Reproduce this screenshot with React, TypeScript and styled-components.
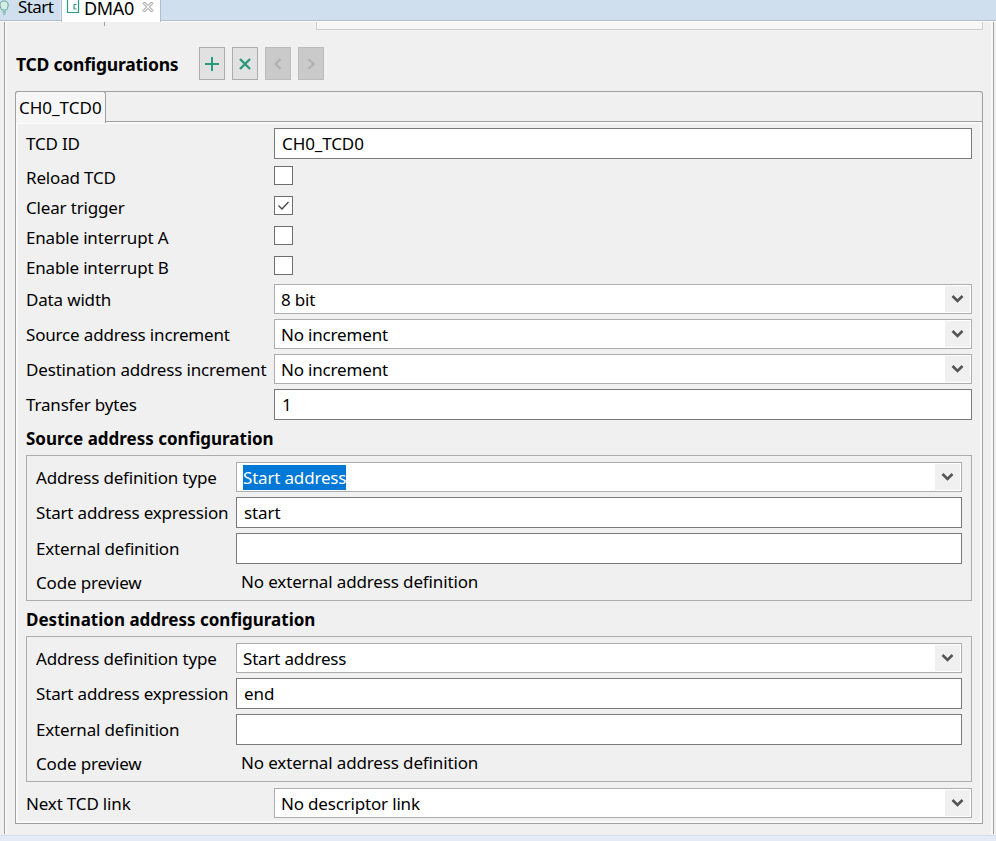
import React from "react";
import styled, { createGlobalStyle } from "styled-components";

const Global = createGlobalStyle`
  html, body { margin: 0; padding: 0; background: #f0f0f0; overflow: hidden; }
  * { box-sizing: border-box; }
  body { font-family: "Noto Sans", "Open Sans", sans-serif; font-size: 17px; color: #000; }
`;

const Page = styled.div`
  width: 996px; height: 841px; display: flex; flex-direction: column; background: #f0f0f0; overflow: hidden;
`;
const TabBar = styled.div`
  height: 21px; flex: none; display: flex; align-items: stretch; background: #cfdfee; border-bottom: 1px solid #b2bccf;
`;
const EditorTab = styled.div<{ $active?: boolean }>`
  display: flex; align-items: center; height: ${(p) => (p.$active ? "22px" : "20px")};
  background: ${(p) => (p.$active ? "#fff" : "transparent")};
  border-right: 1px solid ${(p) => (p.$active ? "#b2bccf" : "#e4ecf5")};
  border-left: ${(p) => (p.$active ? "1px solid #b2bccf" : "none")};
  width: ${(p) => (p.$active ? "100px" : "61px")};
  padding-left: ${(p) => (p.$active ? "4px" : "0")};
  z-index: 1; line-height: 14px;
`;
const TabText = styled.span<{ $ml?: number; $size?: number; $ls?: number }>`
  margin: -6px 0 0 ${(p) => p.$ml ?? 6}px; white-space: nowrap;
  font-size: ${(p) => p.$size ?? 17}px; letter-spacing: ${(p) => p.$ls ?? 0}px;
`;
const WhiteLine = styled.div`height: 1px; flex: none; background: #fff;`;
const Editor = styled.div`
  margin: 0 2px 0 4px; height: 812px; flex: none; border-left: 1px solid #a0a0a0; border-right: 1px solid #a0a0a0;
  padding: 0 2px; background: #f8f8f8;
`;
const EditorInner = styled.div`
  height: 100%; background: #f0f0f0; padding: 0 8px; display: flex; flex-direction: column;
`;
const TopRow = styled.div`height: 8px; flex: none; display: flex; align-items: flex-start;`;
const Tick = styled.div`margin-left: 89px; width: 1px; height: 4px; background: #a0a0a0;`;
const TopStub = styled.div`
  margin-left: auto; width: 667px; height: 8px; background: #f7f7f7; border-left: 1px solid #cfcfcf; border-bottom: 1px solid #cfcfcf; border-right: 1px solid #cfcfcf;
`;
const SectionHeader = styled.div`
  display: flex; align-items: center; margin: 17px 0 11px; height: 33px; flex: none;
`;
const SectionTitle = styled.h2`
  margin: 0 0 -1px 1px; width: 183px; font-size: 17.5px; font-weight: 700; letter-spacing: -0.2px; white-space: nowrap;
`;
const ToolGroup = styled.div`display: flex; gap: 7px;`;
const ToolButton = styled.div<{ $disabled?: boolean }>`
  width: 26px; height: 33px; display: flex; align-items: center; justify-content: center;
  background: ${(p) => (p.$disabled ? "#cacaca" : "#e1e1e1")};
  border: 1px solid ${(p) => (p.$disabled ? "#bcbcbc" : "#adadad")};
`;
const Folder = styled.div`display: flex; flex-direction: column; flex: none;`;
const FolderHead = styled.div`
  height: 30px; display: flex; border: 1px solid #a0a0a0; border-bottom: none; border-radius: 3px 3px 0 0; margin-bottom: 0;
`;
const FolderTab = styled.div`
  width: 91px; margin-left: -1px; margin-top: -1px; height: 32px; border: 1px solid #a0a0a0; border-bottom: none; border-radius: 3px 3px 0 0;
  background: #f6f6f6; padding-left: 3px; display: flex; align-items: center; z-index: 1; font-size: 17px; letter-spacing: 0; white-space: nowrap;
`;
const FolderBody = styled.div`
  border: 1px solid #a0a0a0; padding: 2px; background: #fafafa;
`;
const Form = styled.div`
  background: #f0f0f0; padding: 4px 8px 3px; display: flex; flex-direction: column;
`;
const Row = styled.div<{ $h?: number; $gap?: number; $col?: number }>`
  display: grid; grid-template-columns: ${(p) => p.$col ?? 248}px 1fr; align-items: center;
  height: ${(p) => p.$h ?? 30}px; margin-top: ${(p) => p.$gap ?? 0}px; flex: none;
`;
const Label = styled.div`white-space: nowrap; font-size: 17px; letter-spacing: -0.17px; line-height: 22px; padding-top: 1px;`;
const TextField = styled.div`
  height: 31px; border: 1px solid #7a7a7a; background: #fff; padding: 0 7px; display: flex; align-items: center;
  font-size: 17px; letter-spacing: -0.1px;
`;
const SelectBox = styled.div`
  height: 30px; border: 1px solid #adadad; background: #fff; padding: 1px; display: flex; align-items: stretch;
  font-size: 17px; letter-spacing: -0.18px;
`;
const SelectValue = styled.div`flex: 1; padding-left: 5px; display: flex; align-items: center;`;
const Highlight = styled.span`
  background: #0078d7; color: #fff; padding: 1px 0; line-height: 23px;
`;
const Chevron = styled.div`
  width: 25px; background: #f0f0f0; display: flex; align-items: center; justify-content: center;
`;
const CheckBox = styled.div`
  width: 19px; height: 19px; border: 1px solid #6e6e6e; background: #fff; display: flex; align-items: center; justify-content: center;
  align-self: start; margin-top: 4px;
`;
const GroupTitle = styled.h3`
  margin: 0; height: 35px; padding-top: 6px; font-size: 17px; font-weight: 700; letter-spacing: 0; white-space: nowrap; line-height: 25px; flex: none;
`;
const Group = styled.div`
  height: 146px; border: 1px solid #adadad; padding: 6px 9px 0; display: flex; flex-direction: column; flex: none;
`;
const Preview = styled.div`padding: 0 0 2px 5px; font-size: 17px; letter-spacing: -0.14px; white-space: nowrap;`;
const BottomStrip = styled.div`flex: 1; margin-top: 1px; background: #e4eaf6; border-top: 1px solid #d5ddec;`;

const ChevronIcon = () => (
  <Chevron>
    <svg width="13" height="10" viewBox="0 0 13 10">
      <path d="M1.5 2 L6.5 7 L11.5 2" fill="none" stroke="#555" strokeWidth="2.6" />
    </svg>
  </Chevron>
);

const Select = ({ value, selected }: { value: string; selected?: boolean }) => (
  <SelectBox>
    <SelectValue>{selected ? <Highlight>{value}</Highlight> : value}</SelectValue>
    <ChevronIcon />
  </SelectBox>
);

const Check = ({ on }: { on?: boolean }) => (
  <CheckBox>
    {on && (
      <svg width="13" height="11" viewBox="0 0 13 11">
        <path d="M1.5 5.5 L5 9 L11.5 2" fill="none" stroke="#444" strokeWidth="1.3" />
      </svg>
    )}
  </CheckBox>
);

const AddressGroup = ({ expr, selected }: { expr: string; selected?: boolean }) => (
  <Group>
    <Row $col={200}>
      <Label>Address definition type</Label>
      <Select value="Start address" selected={selected} />
    </Row>
    <Row $col={200} $h={31} $gap={5}>
      <Label>Start address expression</Label>
      <TextField>{expr}</TextField>
    </Row>
    <Row $col={200} $h={31} $gap={5}>
      <Label>External definition</Label>
      <TextField />
    </Row>
    <Row $col={200} $h={36}>
      <Label>Code preview</Label>
      <Preview>No external address definition</Preview>
    </Row>
  </Group>
);

export default function App() {
  return (
    <Page>
      <Global />
      <TabBar>
        <EditorTab>
          <svg width="11" height="16" viewBox="0 0 11 16" style={{ marginLeft: -1, marginTop: -5 }}>
            <path d="M3 10 C0 6 0 1 5 1 C10 1 10 6 7.5 10 Z M3.5 12 H7 M4 14 H6.5" fill="#d8ece6" stroke="#5aa597" strokeWidth="1" />
          </svg>
          <TabText $ml={8} $ls={-0.55}>Start</TabText>
        </EditorTab>
        <EditorTab $active>
          <svg width="14" height="14" viewBox="0 0 14 14" style={{ marginTop: -8 }}>
            <path d="M1.5 0 V12.5 H12.5 V0 M8 4.5 H10.5 M8 9 H10.5 M8 4.5 V9" fill="none" stroke="#2a9a7e" strokeWidth="1.2" />
          </svg>
          <TabText $ml={4} $size={18} $ls={-0.3}>DMA0</TabText>
          <svg width="12" height="12" viewBox="0 0 12 12" style={{ marginLeft: 8, marginTop: -9 }}>
            <path d="M1 2.5 L2.5 1 L6 4.5 L9.5 1 L11 2.5 L7.5 6 L11 9.5 L9.5 11 L6 7.5 L2.5 11 L1 9.5 L4.5 6 Z" fill="#f4f4f4" stroke="#8c8c8c" strokeWidth="1" />
          </svg>
        </EditorTab>
      </TabBar>
      <WhiteLine />
      <Editor>
        <EditorInner>
          <TopRow>
            <Tick />
            <TopStub />
          </TopRow>
          <SectionHeader>
            <SectionTitle>TCD configurations</SectionTitle>
            <ToolGroup>
              <ToolButton>
                <svg width="16" height="16" viewBox="0 0 16 16">
                  <path d="M8 1 V15 M1 8 H15" stroke="#2a9a7e" strokeWidth="2" fill="none" />
                </svg>
              </ToolButton>
              <ToolButton>
                <svg width="14" height="14" viewBox="0 0 14 14">
                  <path d="M2 2 L12 12 M12 2 L2 12" stroke="#2a9a7e" strokeWidth="2.4" fill="none" />
                </svg>
              </ToolButton>
              <ToolButton $disabled>
                <svg width="10" height="14" viewBox="0 0 10 14">
                  <path d="M7.5 2 L2.5 7 L7.5 12" stroke="#b2b2b2" strokeWidth="2.4" fill="none" />
                </svg>
              </ToolButton>
              <ToolButton $disabled>
                <svg width="10" height="14" viewBox="0 0 10 14">
                  <path d="M2.5 2 L7.5 7 L2.5 12" stroke="#b2b2b2" strokeWidth="2.4" fill="none" />
                </svg>
              </ToolButton>
            </ToolGroup>
          </SectionHeader>
          <Folder>
            <FolderHead>
              <FolderTab>CH0_TCD0</FolderTab>
            </FolderHead>
            <FolderBody>
              <Form>
                <Row $h={31}>
                  <Label>TCD ID</Label>
                  <TextField>CH0_TCD0</TextField>
                </Row>
                <Row $gap={3}>
                  <Label>Reload TCD</Label>
                  <Check />
                </Row>
                <Row>
                  <Label>Clear trigger</Label>
                  <Check on />
                </Row>
                <Row>
                  <Label>Enable interrupt A</Label>
                  <Check />
                </Row>
                <Row>
                  <Label>Enable interrupt B</Label>
                  <Check />
                </Row>
                <Row $gap={2}>
                  <Label>Data width</Label>
                  <Select value="8 bit" />
                </Row>
                <Row $gap={5}>
                  <Label>Source address increment</Label>
                  <Select value="No increment" />
                </Row>
                <Row $gap={5}>
                  <Label>Destination address increment</Label>
                  <Select value="No increment" />
                </Row>
                <Row $gap={5} $h={31}>
                  <Label>Transfer bytes</Label>
                  <TextField>1</TextField>
                </Row>
                <GroupTitle>Source address configuration</GroupTitle>
                <AddressGroup expr="start" selected />
                <GroupTitle>Destination address configuration</GroupTitle>
                <AddressGroup expr="end" />
                <Row $gap={6}>
                  <Label>Next TCD link</Label>
                  <Select value="No descriptor link" />
                </Row>
              </Form>
            </FolderBody>
          </Folder>
        </EditorInner>
      </Editor>
      <BottomStrip />
    </Page>
  );
}
